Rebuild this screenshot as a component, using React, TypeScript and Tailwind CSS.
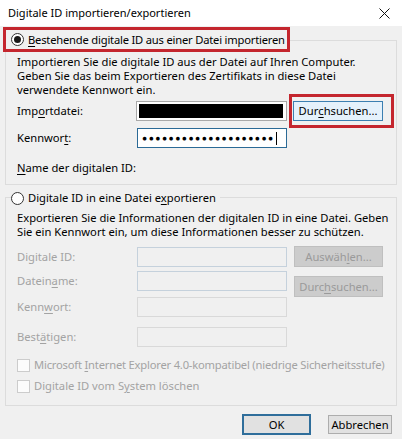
import type { ReactNode } from 'react';

const U = ({ children }: { children: ReactNode }) => <span className="underline underline-offset-2">{children}</span>;

const Radio = ({ checked }: { checked?: boolean }) => (
  <span className="w-[13px] h-[13px] rounded-full border border-[#333] bg-white flex items-center justify-center shrink-0">
    {checked && <span className="w-[7px] h-[7px] rounded-full bg-[#1a1a1a]" />}
  </span>
);

const Checkbox = () => <span className="w-[13px] h-[13px] border border-[#cccccc] bg-[#fcfcfc] shrink-0" />;

const DisabledInput = ({ blue }: { blue?: boolean }) => (
  <div className={`w-[150px] h-[20px] border bg-[#f0f0f0] ${blue ? 'border-[#c5d1dc]' : 'border-[#d9d9d9]'}`} />
);

const DisabledButton = ({ children }: { children: ReactNode }) => (
  <div className="w-[89px] h-[21px] border border-[#bfbfbf] bg-[#cccccc] text-[#9a9a9a] flex items-center justify-center">{children}</div>
);

export default function App() {
  return (
    <div className="w-[402px] h-[439px] bg-[#f0f0f0] text-[11.2px] text-black leading-[14px] whitespace-nowrap font-['Noto_Sans',sans-serif] flex flex-col overflow-hidden">
      {/* title bar */}
      <div className="h-[26px] bg-white flex items-center justify-between pl-[8px] pr-[12px] shrink-0">
        <span className="text-[11px]">Digitale ID importieren/exportieren</span>
        <svg width="11" height="11" viewBox="0 0 11 11" stroke="#111" strokeWidth="1">
          <path d="M0.5 0.5L10.5 10.5M10.5 0.5L0.5 10.5" />
        </svg>
      </div>

      {/* import group */}
      <div className="mx-[5px] mt-[14px] border border-[#dcdcdc] pl-[11px] pb-[9px]">
        <div className="-mt-[14px] -ml-[14px] h-[25px] w-fit pr-[2px] border-[3px] border-[#c4262e] bg-[#f0f0f0] flex items-center gap-[4px] pl-[5px] tracking-[-0.2px]">
          <Radio checked />
          <span>
            <U>B</U>estehende digitale ID aus einer Datei importieren
          </span>
        </div>
        <p className="mt-[3px]">
          Importieren Sie die digitale ID aus der Datei auf Ihren Computer.
          <br />
          Geben Sie das beim Exportieren des Zertifikats in diese Datei
          <br />
          verwendete Kennwort ein.
        </p>
        <div className="-mt-[3px] h-[34px] flex items-center">
          <span className="w-[119px]">
            Imp<U>o</U>rtdatei:
          </span>
          <div className="w-[151px] h-[20px] border border-[#a9a9a9] bg-white p-[2px]">
            <div className="w-[144px] h-full bg-black" />
          </div>
          <div className="ml-[2px] w-[105px] h-[34px] border-[3px] border-[#c4262e] flex items-center pl-[1px]">
            <div className="w-[90px] h-[20px] border border-[#3c7fb1] bg-[#e5f1fb] flex items-center justify-center">
              Dur<U>c</U>hsuchen...
            </div>
          </div>
        </div>
        <div className="h-[20px] flex items-center">
          <span className="w-[120px]">
            Kennwor<U>t</U>:
          </span>
          <div className="w-[150px] h-[20px] border border-[#2b6a96] bg-white flex items-center pl-[4px] gap-[1px]">
            <span className="text-[8.5px] tracking-[1.5px]">●●●●●●●●●●●●●●●●●●●●</span>
            <span className="w-px h-[13px] bg-black" />
          </div>
        </div>
        <p className="mt-[13px]">
          <U>N</U>ame der digitalen ID:
        </p>
      </div>

      {/* export group */}
      <div className="mx-[5px] mt-[12px] border border-[#dcdcdc] pl-[11px] pb-[12px]">
        <div className="-mt-[8px] -ml-[6px] h-[16px] w-fit bg-[#f0f0f0] flex items-center gap-[4px] pr-[4px]">
          <Radio />
          <span>
            Digitale ID in eine Datei e<U>x</U>portieren
          </span>
        </div>
        <p className="mt-[5px]">
          Exportieren Sie die Informationen der digitalen ID in eine Datei. Geben
          <br />
          Sie ein Kennwort ein, um diese Informationen besser zu schützen.
        </p>
        <div className="mt-[7px] h-[21px] flex items-center text-[#a3a3a3]">
          <span className="w-[120px]">Digitale ID:</span>
          <DisabledInput blue />
          <div className="ml-[7px]">
            <DisabledButton>
              Auswäh<U>l</U>en...
            </DisabledButton>
          </div>
        </div>
        <div className="mt-[4px] h-[20px] flex items-start text-[#a3a3a3]">
          <span className="w-[120px] h-[20px] flex items-center">
            Datein<U>a</U>me:
          </span>
          <DisabledInput blue />
          <div className="ml-[7px] mt-[5px]">
            <DisabledButton>
              Durc<U>h</U>suchen...
            </DisabledButton>
          </div>
        </div>
        <div className="mt-[6px] h-[20px] flex items-center text-[#a3a3a3]">
          <span className="w-[120px]">
            Kenn<U>w</U>ort:
          </span>
          <DisabledInput />
        </div>
        <div className="mt-[10px] h-[20px] flex items-center text-[#a3a3a3]">
          <span className="w-[120px]">
            Best<U>ä</U>tigen:
          </span>
          <DisabledInput />
        </div>
        <div className="mt-[11px] h-[14px] flex items-center gap-[4px] text-[#a3a3a3]">
          <Checkbox />
          <span className="tracking-[-0.2px]">
            Microsoft <U>I</U>nternet Explorer 4.0-kompatibel (niedrige Sicherheitsstufe)
          </span>
        </div>
        <div className="mt-[7px] h-[14px] flex items-center gap-[4px] text-[#a3a3a3]">
          <Checkbox />
          <span>
            Digitale ID vom S<U>y</U>stem löschen
          </span>
        </div>
      </div>

      {/* footer */}
      <div className="mt-[8px] pr-[10px] flex items-center justify-end gap-[17px]">
        <div className="w-[69px] h-[21px] border-2 border-[#2f6e9b] bg-[#e1e1e1] flex items-center justify-center">OK</div>
        <div className="w-[64px] h-[19px] border border-[#adadad] bg-[#e1e1e1] flex items-center justify-center">Abbrechen</div>
      </div>
    </div>
  );
}
